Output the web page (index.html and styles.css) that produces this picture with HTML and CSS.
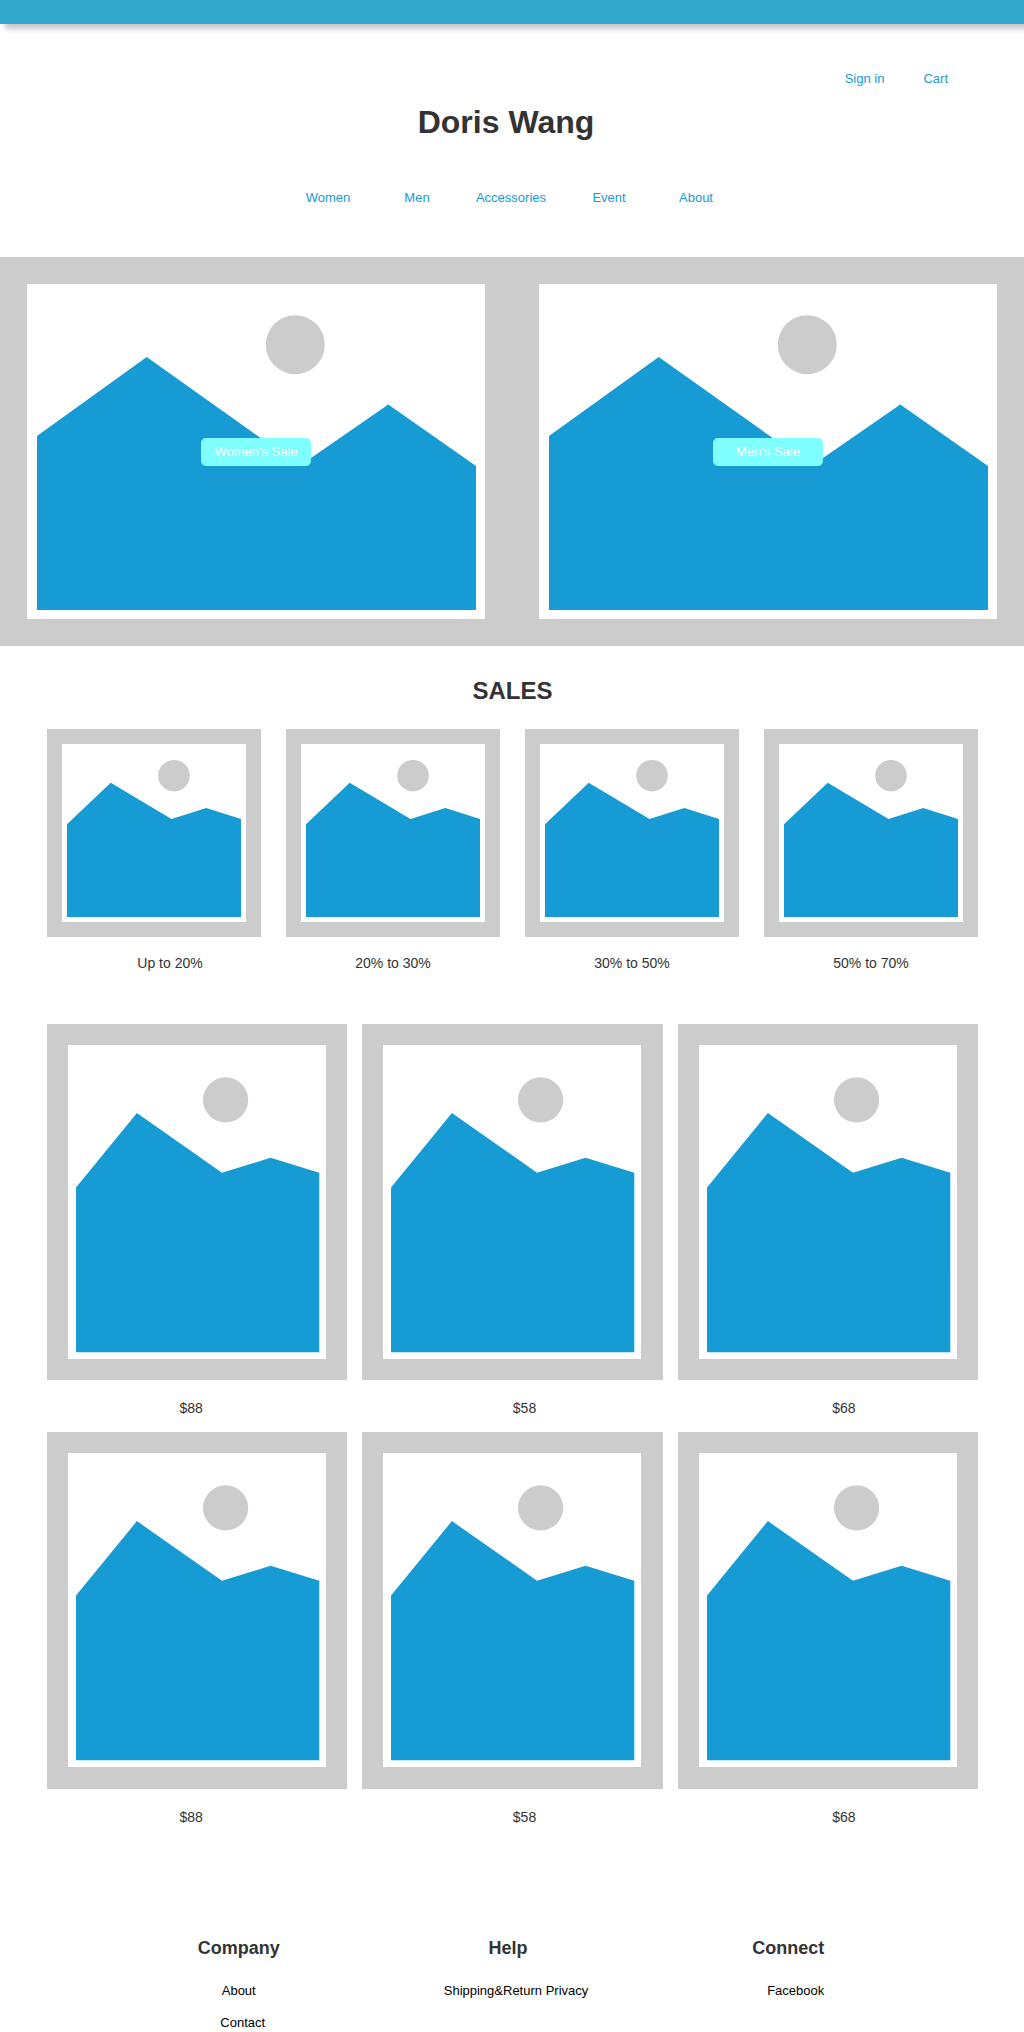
FILE: index.html
```html
<!DOCTYPE html>
<html lang="en">
<head>
  <meta charset="utf-8">
  <meta name="viewport" content="width=device-width, initial-scale=1">
  <title>Doris Wang</title>
  <link rel="stylesheet" href="styles.css">
</head>
<body>
  <!-- Placeholder pictures, one per format -->
  <svg class="sprite" aria-hidden="true">
    <symbol id="picture-wide" viewBox="0 0 512 389">
      <rect class="paper" x="27" y="27" width="458" height="335"/>
      <circle class="sun" cx="295.3" cy="87.7" r="29.5"/>
      <path class="hills" d="M37 179 146.7 100 299.8 208.8 388.3 147.5 476 209V353H37Z"/>
    </symbol>
    <symbol id="picture-small" viewBox="0 0 214 208">
      <rect class="paper" x="15" y="15" width="184" height="178"/>
      <circle class="sun" cx="127" cy="46.7" r="15.8"/>
      <path class="hills" d="M20 95.3 63.7 53.7 124.5 90 159.3 79 194 90V188H20Z"/>
    </symbol>
    <symbol id="picture-tall" viewBox="0 0 300 356">
      <rect class="paper" x="21" y="21" width="258" height="314"/>
      <circle class="sun" cx="178.4" cy="75.8" r="22.6"/>
      <path class="hills" d="M29 163.3 89.8 89 174.8 148.5 223.3 133.7 272 148.5V328H29Z"/>
    </symbol>
  </svg>

  <div class="topbar"></div>

  <header class="header">
    <div class="account">
      <a href="#">Sign in</a>
      <a href="#">Cart</a>
    </div>
    <h1 class="brand">Doris Wang</h1>
    <nav class="menu">
      <a href="#">Women</a>
      <a href="#">Men</a>
      <a href="#">Accessories</a>
      <a href="#">Event</a>
      <a href="#">About</a>
    </nav>
  </header>

  <main>
    <section class="hero">
      <div class="banner">
        <svg class="picture" viewBox="0 0 512 389" role="img" aria-label="Women's sale"><use href="#picture-wide"/></svg>
        <button class="banner-button" type="button">Women's Sale</button>
      </div>
      <div class="banner">
        <svg class="picture" viewBox="0 0 512 389" role="img" aria-label="Men's sale"><use href="#picture-wide"/></svg>
        <button class="banner-button" type="button">Men's Sale</button>
      </div>
    </section>

    <section class="sales">
      <h2 class="section-title">SALES</h2>
      <div class="discounts">
        <figure class="discount">
          <svg class="picture" viewBox="0 0 214 208" aria-hidden="true"><use href="#picture-small"/></svg>
          <figcaption class="caption indent-wide">Up to 20%</figcaption>
        </figure>
        <figure class="discount">
          <svg class="picture" viewBox="0 0 214 208" aria-hidden="true"><use href="#picture-small"/></svg>
          <figcaption class="caption">20% to 30%</figcaption>
        </figure>
        <figure class="discount">
          <svg class="picture" viewBox="0 0 214 208" aria-hidden="true"><use href="#picture-small"/></svg>
          <figcaption class="caption">30% to 50%</figcaption>
        </figure>
        <figure class="discount">
          <svg class="picture" viewBox="0 0 214 208" aria-hidden="true"><use href="#picture-small"/></svg>
          <figcaption class="caption">50% to 70%</figcaption>
        </figure>
      </div>

      <div class="products">
        <figure class="product">
          <svg class="picture" viewBox="0 0 300 356" aria-hidden="true"><use href="#picture-tall"/></svg>
          <figcaption class="caption outdent">$88</figcaption>
        </figure>
        <figure class="product">
          <svg class="picture" viewBox="0 0 300 356" aria-hidden="true"><use href="#picture-tall"/></svg>
          <figcaption class="caption indent">$58</figcaption>
        </figure>
        <figure class="product">
          <svg class="picture" viewBox="0 0 300 356" aria-hidden="true"><use href="#picture-tall"/></svg>
          <figcaption class="caption indent-wide">$68</figcaption>
        </figure>
        <figure class="product">
          <svg class="picture" viewBox="0 0 300 356" aria-hidden="true"><use href="#picture-tall"/></svg>
          <figcaption class="caption outdent">$88</figcaption>
        </figure>
        <figure class="product">
          <svg class="picture" viewBox="0 0 300 356" aria-hidden="true"><use href="#picture-tall"/></svg>
          <figcaption class="caption indent">$58</figcaption>
        </figure>
        <figure class="product">
          <svg class="picture" viewBox="0 0 300 356" aria-hidden="true"><use href="#picture-tall"/></svg>
          <figcaption class="caption indent-wide">$68</figcaption>
        </figure>
      </div>
    </section>
  </main>

  <footer class="footer">
    <section class="footer-group company">
      <h3>Company</h3>
      <ul>
        <li><a href="#">About</a></li>
        <li><a href="#">Contact</a></li>
      </ul>
    </section>
    <section class="footer-group help">
      <h3>Help</h3>
      <ul>
        <li><a href="#">Shipping&amp;Return Privacy</a></li>
      </ul>
    </section>
    <section class="footer-group connect">
      <h3>Connect</h3>
      <ul>
        <li><a href="#">Facebook</a></li>
      </ul>
    </section>
  </footer>
</body>
</html>
```
FILE: styles.css
```css
:root {
  --blue: #169bd5;
  --grey: #ccc;
  --text: #333;
}

* {
  box-sizing: border-box;
}

body {
  margin: 0;
  background: #fff;
  color: var(--text);
  font: 13px/16px "Liberation Sans", Arial, sans-serif;
}

h1,
h2,
h3,
ul,
figure {
  margin: 0;
  padding: 0;
}

ul {
  list-style: none;
}

a {
  color: var(--blue);
  text-decoration: none;
}

/* Placeholder pictures */
.sprite {
  position: absolute;
  width: 0;
  height: 0;
}

.picture {
  display: block;
  width: 100%;
  height: auto;
  background: var(--grey);
}

.paper {
  fill: #fff;
  shape-rendering: crispEdges;
}

.sun {
  fill: var(--grey);
}

.hills {
  fill: var(--blue);
}

/* Header */
.topbar {
  height: 24px;
  background: #35a8ce;
  box-shadow: 5px 5px 5px rgba(0, 0, 0, 0.22);
}

.header {
  padding: 47px 0 51px;
}

.account {
  display: flex;
  justify-content: flex-end;
  gap: 39px;
  padding-right: 76px;
}

.brand {
  margin-top: 17px;
  padding-right: 12px;
  font-size: 32px;
  line-height: 36px;
  text-align: center;
}

.menu {
  display: grid;
  grid-template-columns: 62px 48px 72px 56px 50px;
  justify-content: center;
  gap: 34px;
  margin-top: 50px;
  padding-right: 6px;
  text-align: center;
}

/* Hero */
.hero {
  display: grid;
  grid-template-columns: 1fr 1fr;
}

.banner {
  display: grid;
  place-items: center;
}

.banner > * {
  grid-area: 1 / 1;
}

.banner-button {
  width: 110px;
  height: 28px;
  padding: 0;
  border: 0;
  border-radius: 5px;
  background: #80ffff;
  color: #fff;
  font: inherit;
  cursor: pointer;
}

/* Sales */
.sales {
  padding: 31px 46px 0 47px;
}

.section-title {
  font-size: 24px;
  line-height: 28px;
  text-align: center;
}

.discounts {
  display: grid;
  grid-template-columns: repeat(4, 1fr);
  gap: 25px;
  margin-top: 24px;
}

.products {
  display: grid;
  grid-template-columns: repeat(3, 1fr);
  gap: 16px 15px;
  margin-top: 53px;
}

.caption {
  margin-top: 18px;
  font-size: 14px;
  text-align: center;
}

.product .caption {
  margin-top: 20px;
}

.indent {
  padding-left: 24px;
}

.indent-wide {
  padding-left: 32px;
}

.outdent {
  padding-right: 12px;
}

/* Footer */
.footer {
  display: flex;
  justify-content: center;
  gap: 164px;
  padding: 113px 2px 0 0;
  text-align: center;
}

.footer-group h3 {
  font-size: 18px;
  line-height: 20px;
}

.footer-group ul {
  display: grid;
  gap: 16px;
  margin-top: 25px;
}

.footer-group a {
  color: #000;
}

.company li + li {
  padding-left: 8px;
}

.help h3 {
  padding-right: 16px;
}

.connect {
  text-align: right;
}
```
